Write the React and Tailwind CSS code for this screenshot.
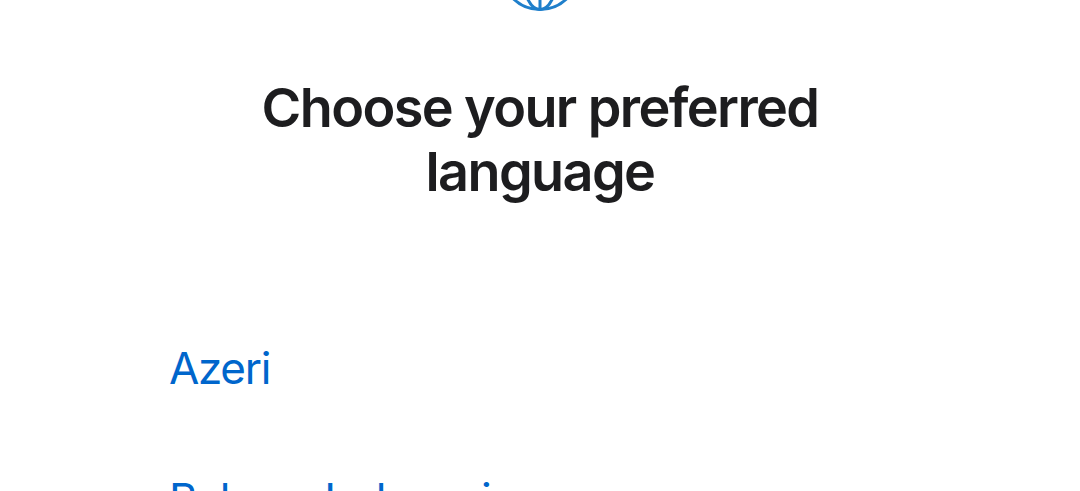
export default function App() {
  return (
    <div className="h-[491px] w-full overflow-hidden bg-white font-['Inter','sans-serif']">
      <div className="flex flex-col items-center">
        <svg className="mt-[-69px] h-20 w-20 text-[#1f7fcb]" viewBox="0 0 80 80" fill="none" stroke="currentColor" strokeWidth="3">
          <circle cx="40" cy="40" r="38.5" />
          <ellipse cx="40" cy="40" rx="18" ry="38.5" />
          <path d="M40 1.5V78.5M1.5 40H78.5M8 62H72" />
        </svg>
        <h1 className="mt-[65px] w-[640px] text-center text-[54px] leading-[64px] font-semibold tracking-[-0.03em] text-[#1d1d1f]">
          Choose your preferred language
        </h1>
      </div>
      <ul className="mt-[142px] flex flex-col gap-[87px] px-[169px] text-[44px] leading-[44px] tracking-[-0.03em] text-[#0066cc]">
        <li>Azeri</li>
        <li>Bahasa Indonesia</li>
      </ul>
    </div>
  );
}
